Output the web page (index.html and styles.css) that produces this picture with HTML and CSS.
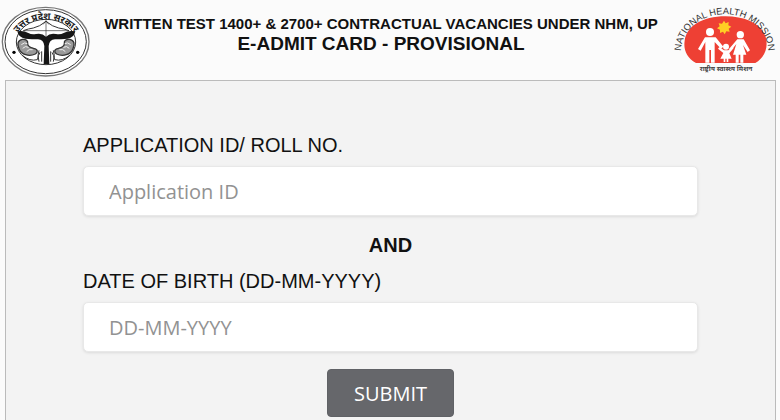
FILE: index.html
```html
<!DOCTYPE html>
<html lang="en">
<head>
<meta charset="utf-8">
<title>E-Admit Card</title>
<link rel="stylesheet" href="styles.css">
</head>
<body>
<header class="header">
  <svg class="logo" viewBox="0 0 270 240" role="img" aria-label="Government of Uttar Pradesh">
    <defs><path id="up-arc" d="M41 136 A97 78 0 0 1 235 136"/></defs>
    <g fill="none" stroke="#333">
      <ellipse cx="137" cy="125" rx="130" ry="103" fill="#fff" stroke="#777" stroke-width="4"/>
      <ellipse cx="137" cy="125" rx="122" ry="96" stroke-width="3"/>
      <ellipse cx="138" cy="126" rx="89" ry="68" stroke-width="3"/>
      <path d="M70 92 Q85 86 100 84 Q119 80 138 64 Q157 80 176 84 Q192 86 207 92" stroke-width="3"/>
      <path d="M138 62V110M130 73l8-11 8 11M70 92h137" stroke-width="2"/>
      <path d="M57 146c-7-14-3-26 10-28 11-1 17 5 16 12-1 8 6 12 18 15 14 3 13 12 5 17-19 9-42 2-49-16z" fill="#999" stroke-width="4"/>
      <path d="M219 146c7-14 3-26-10-28-11-1-17 5-16 12 1 8-6 12-18 15-14 3-13 12-5 17 19 9 42 2 49-16z" fill="#999" stroke-width="4"/>
      <path d="M64 134q10-9 18-3M68 145q8-9 18-3M80 155q6-9 18-6M212 134q-10-9-18-3M208 145q-8-9-18-3M196 155q-6-9-18-6" stroke="#eee" stroke-width="3"/>
      <path d="M67 166q22 19 45 13 3-14 8-22M209 166q-22 19-45 13-3-14-8-22M117 151q-6 14 0 34M160 151q6 14 0 34M125 154v31M152 154v31" stroke-width="3"/>
    </g>
    <path d="M52 94q18-4 33 5 10 6 23 3 18-4 30 8 12-12 30-8 13 3 23-3 15-9 35-5-4 20-23 22-20 2-38 2-17 1-19 20l2 54h-17l2-54q-2-19-19-20-18 0-38-2-20-2-24-22z" fill="#161616"/>
    <circle cx="42" cy="157" r="5"/><circle cx="233" cy="157" r="5"/>
    <text class="up-text"><textPath href="#up-arc" startOffset="50%" text-anchor="middle">उत्तर प्रदेश सरकार</textPath></text>
  </svg>
  <div class="titles">
    <p class="exam">WRITTEN TEST 1400+ &amp; 2700+ CONTRACTUAL VACANCIES UNDER NHM, UP</p>
    <h1 class="title">E-ADMIT CARD - PROVISIONAL</h1>
  </div>
  <svg class="logo logo-nhm" viewBox="0 0 324 240" role="img" aria-label="National Health Mission">
    <defs><path id="nhm-ring" d="M28 168 A131 112 0 1 1 288 168"/></defs>
    <path d="M72 189C43 173 34 148 38 122 43 79 91 49 160 49s118 29 123 72c4 27-7 52-33 68z" fill="#ee4034"/>
    <path d="m156 62 5 8 9-4-1 10 9 4-8 6 3 9-10-1-5 9-5-8-9 4v-10l-9-4 8-6-3-9 10 1z" fill="#ffce24"/>
    <g fill="#fff">
      <circle cx="114" cy="96" r="12"/><circle cx="205" cy="104" r="11"/><circle cx="162" cy="140" r="9"/>
      <path d="M99 112h32l23 28-7 6-19-20v62h-11v-38h-5v38h-12v-62l-14 26-8-5z"/>
      <path d="M196 118h19l19 33-7 5-14-21 10 29h-9v24h-9v-24h-5v24h-9v-24h-8l10-32-16 20-6-5z"/>
      <path d="M156 151h13l12-11 4 4-13 16 7 16h-10v10h-5v-10h-4v10h-5v-10h-10l9-17-16-13 4-5z"/>
    </g>
    <text class="nhm-text"><textPath href="#nhm-ring" startOffset="50%" text-anchor="middle">NATIONAL HEALTH MISSION</textPath></text>
    <text class="nhm-hindi" x="162" y="213" text-anchor="middle">राष्ट्रीय स्वास्थ्य मिशन</text>
  </svg>
</header>
<main class="panel">
  <form class="form">
    <label class="label" for="app-id">APPLICATION ID/ ROLL NO.</label>
    <input class="field" id="app-id" type="text" placeholder="Application ID">
    <p class="and">AND</p>
    <label class="label" for="dob">DATE OF BIRTH (DD-MM-YYYY)</label>
    <input class="field" id="dob" type="text" placeholder="DD-MM-YYYY">
    <button class="submit" type="submit">SUBMIT</button>
  </form>
</main>
</body>
</html>
```
FILE: styles.css
```css
* { box-sizing: border-box; }
body {
  display: flex;
  flex-direction: column;
  min-height: 100vh;
  margin: 0;
  background: #fbfbfb;
  color: #111;
  font-family: "Liberation Sans", Arial, sans-serif;
}
.header {
  display: flex;
  align-items: flex-start;
  justify-content: space-between;
  height: 80px;
}
.logo { flex: none; width: 90px; height: 80px; }
.logo-nhm { width: 108px; }
.titles {
  flex: 1;
  padding-top: 14px;
  text-align: center;
  white-space: nowrap;
}
.exam { margin: 0; font-size: 15px; font-weight: 700; line-height: 20px; }
.title { margin: 0; font-size: 19px; line-height: 20px; }
.up-text { font: 700 28px "Noto Sans", sans-serif; fill: #222; }
.nhm-text { font: 28px "Liberation Sans", Arial, sans-serif; fill: #333; }
.nhm-hindi { font: 700 20px "Noto Sans", sans-serif; fill: #444; }
.panel {
  flex: 1;
  margin: 0 4px 0 5px;
  padding: 52px 77px 0;
  border: 1px solid #bbb;
  border-bottom: 0;
  background: #f3f3f3;
}
.form { display: flex; flex-direction: column; }
.label { font-size: 20px; line-height: 24px; }
.field {
  width: 100%;
  height: 50px;
  margin-top: 9px;
  padding: 0 25px;
  border: 1px solid #e8e8e8;
  border-radius: 5px;
  background: #fff;
  box-shadow: 0 1px 3px rgba(0, 0, 0, 0.1);
  font: 20px "Open Sans", sans-serif;
}
.field::placeholder { color: #929292; opacity: 1; }
.and { margin: 17px 0 12px; font-size: 20px; font-weight: 700; line-height: 24px; text-align: center; }
.submit {
  align-self: center;
  height: 48px;
  margin-top: 17px;
  padding: 0 26px;
  border: 1px solid #606266;
  border-radius: 4px;
  background: #66676b;
  color: #fff;
  font: 20px "Open Sans", sans-serif;
}
```
